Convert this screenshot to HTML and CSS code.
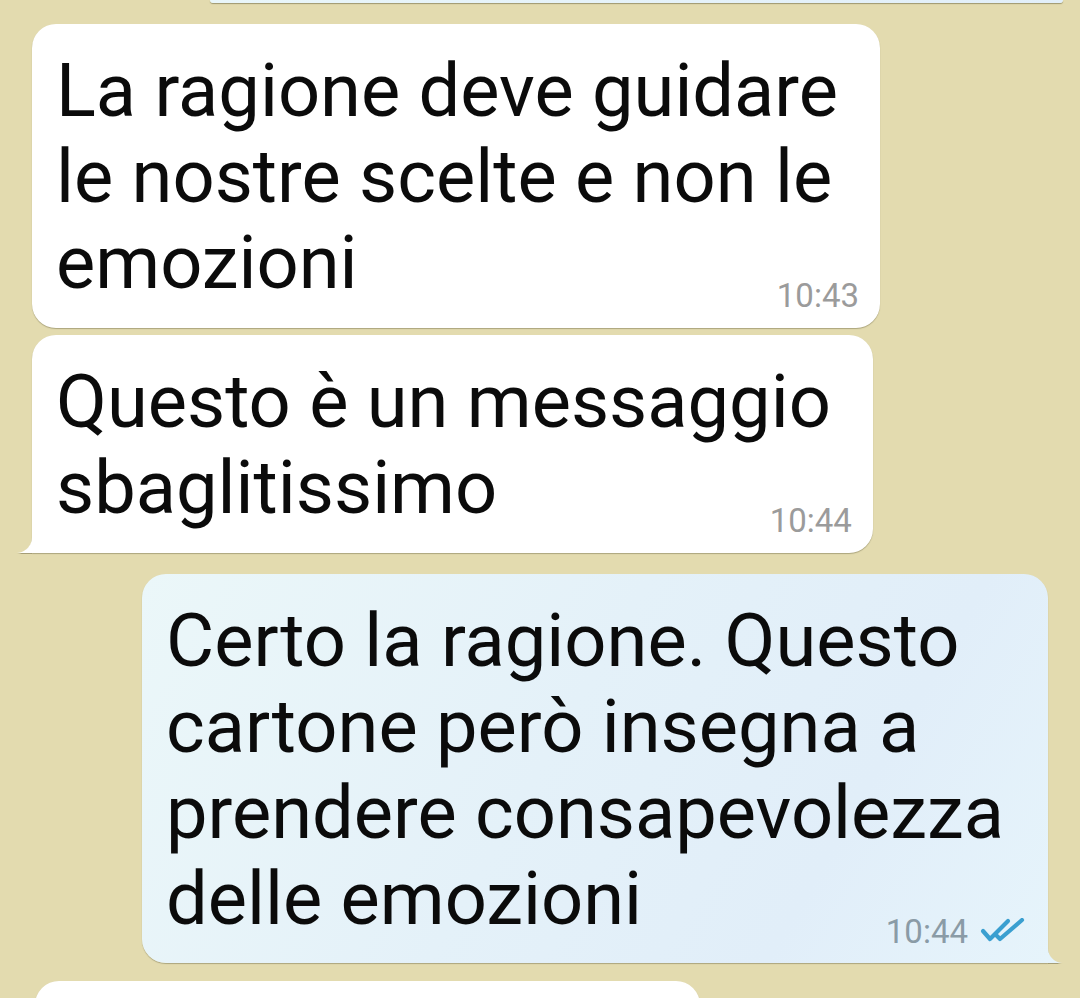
FILE: index.html
```html
<!DOCTYPE html>
<html lang="it">
<head>
<meta charset="utf-8">
<title>Chat</title>
<link rel="stylesheet" href="styles.css">
</head>
<body>
<div class="chat">
  <div class="stub-top"></div>

  <div class="msg in">
    <div class="text">La ragione deve guidare<br>le nostre scelte e non le<br>emozioni</div>
    <div class="meta"><span class="time">10:43</span></div>
  </div>

  <div class="msg in tail-left gap-sm">
    <div class="text">Questo è un messaggio<br>sbaglitissimo</div>
    <div class="meta"><span class="time">10:44</span></div>
  </div>

  <div class="msg out tail-right">
    <div class="text">Certo la ragione. Questo<br>cartone però insegna a<br>prendere consapevolezza<br>delle emozioni</div>
    <div class="meta">
      <span class="time">10:44</span>
      <svg class="ticks" width="45" height="25" viewBox="0 0 45 25" aria-hidden="true">
        <path d="M3 13 L10 21 L28 3" fill="none" stroke="#3a9fd0" stroke-width="4.2" stroke-linecap="round" stroke-linejoin="round"/>
        <path d="M17 18 L20 21 L42 2" fill="none" stroke="#3a9fd0" stroke-width="4.2" stroke-linecap="round" stroke-linejoin="round"/>
      </svg>
    </div>
  </div>

  <div class="stub-bottom"></div>
</div>
</body>
</html>
```

FILE: styles.css
```css
html, body {
  margin: 0;
  padding: 0;
}

body {
  background: #e3dbaf;
  font-family: Roboto, "Noto Sans", "Liberation Sans", sans-serif;
  color: #0b0b0b;
}

.chat {
  height: 998px;
  overflow: hidden;
  display: flex;
  flex-direction: column;
  padding: 0 32px;
}

.stub-top {
  flex: none;
  align-self: flex-end;
  width: 853px;
  height: 3px;
  margin-right: -15px;
  background: linear-gradient(90deg, #e9f6f9, #e2eff9);
  border-radius: 0 0 6px 6px;
  box-shadow: 0 1px 1px rgba(90, 85, 50, 0.5);
}

.msg {
  flex: none;
  position: relative;
  display: grid;
  width: fit-content;
  padding: 24px 42px 22px 24px;
  border-radius: 24px;
  background: #ffffff;
  box-shadow: 0 1px 1px rgba(90, 85, 50, 0.4);
  margin-top: 21px;
}

.msg.in {
  align-self: flex-start;
}

.msg.gap-sm {
  margin-top: 7px;
}

.msg.out {
  align-self: flex-end;
  margin-top: 21px;
  padding-left: 24px;
  padding-right: 44px;
  padding-bottom: 21px;
  background: linear-gradient(120deg, #ebf7f9 0%, #e4f1f9 45%, #e1eef9 75%, #e6f4fb 100%);
}

.text {
  grid-area: 1 / 1;
  font-size: 74px;
  line-height: 86px;
  white-space: nowrap;
}

.meta {
  grid-area: 1 / 1;
  justify-self: end;
  align-self: end;
  display: flex;
  align-items: center;
  gap: 12px;
  margin-right: -21px;
  margin-bottom: -6px;
}

.time {
  font-size: 33px;
  line-height: 33px;
  color: #9b9b9b;
}

.msg.out .time {
  color: #8a9ba6;
}

.ticks {
  display: block;
  margin-top: -2px;
}

.tail-left {
  border-bottom-left-radius: 0;
}

.tail-left::before {
  content: "";
  position: absolute;
  left: -16px;
  bottom: 0;
  width: 16px;
  height: 16px;
  background: radial-gradient(circle at 0 0, transparent 15.5px, #ffffff 16.5px);
  filter: drop-shadow(0 1px 0.5px rgba(90, 85, 50, 0.45));
}

.tail-right {
  border-bottom-right-radius: 0;
}

.tail-right::after {
  content: "";
  position: absolute;
  right: -15px;
  bottom: 0;
  width: 15px;
  height: 15px;
  background: radial-gradient(circle at 100% 0, transparent 14.5px, #e6f4fb 15.5px);
  filter: drop-shadow(0 1px 0.5px rgba(90, 85, 50, 0.45));
}

.stub-bottom {
  align-self: flex-start;
  flex: none;
  width: 665px;
  height: 120px;
  margin-top: 18px;
  margin-left: 3px;
  background: #ffffff;
  border-radius: 24px 24px 0 0;
  box-shadow: 0 1px 1px rgba(90, 85, 50, 0.4);
}
```
